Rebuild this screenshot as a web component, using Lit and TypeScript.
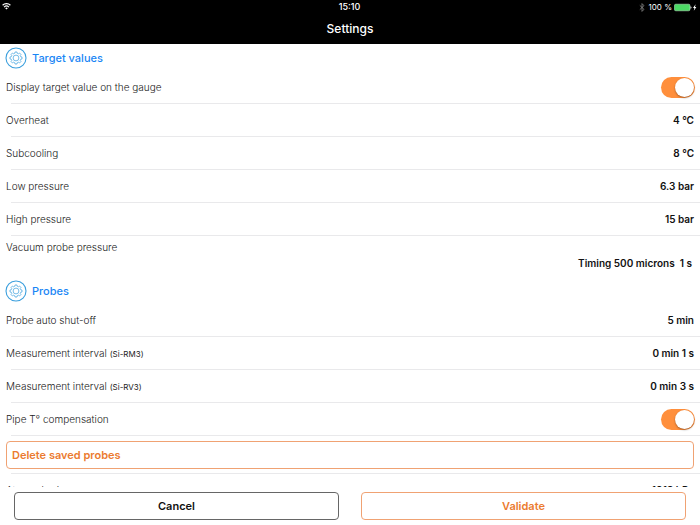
import { LitElement, html, css, svg, nothing } from "lit";
import { customElement, property } from "lit/decorators.js";

type Row = {
  label: string;
  note?: string;
  value?: string;
  toggle?: boolean;
  stacked?: boolean;
};

const targetRows: Row[] = [
  { label: "Display target value on the gauge", toggle: true },
  { label: "Overheat", value: "4 °C" },
  { label: "Subcooling", value: "8 °C" },
  { label: "Low pressure", value: "6.3 bar" },
  { label: "High pressure", value: "15 bar" },
  { label: "Vacuum probe pressure", value: "Timing 500 microns\u00a0 1 s", stacked: true },
];

const probeRows: Row[] = [
  { label: "Probe auto shut-off", value: "5 min" },
  { label: "Measurement interval", note: "(Si-RM3)", value: "0 min 1 s" },
  { label: "Measurement interval", note: "(Si-RV3)", value: "0 min 3 s" },
  { label: "Pipe T° compensation", toggle: true },
];

function gearPath(teeth: number, cx: number, cy: number, outer: number, inner: number): string {
  const step = (Math.PI * 2) / teeth;
  const points: string[] = [];
  for (let i = 0; i < teeth; i++) {
    for (const [offset, r] of [[-0.32, inner], [-0.2, outer], [0.2, outer], [0.32, inner]]) {
      const a = (i + offset) * step;
      points.push(`${(cx + r * Math.sin(a)).toFixed(2)} ${(cy - r * Math.cos(a)).toFixed(2)}`);
    }
  }
  return `M${points.join("L")}Z`;
}

const gear = gearPath(8, 11, 11, 6.1, 4.9);

@customElement("status-bar")
export class StatusBar extends LitElement {
  static styles = css`
    :host {
      display: grid;
      grid-template-columns: 1fr auto 1fr;
      align-items: center;
      height: 14px;
      padding: 0 3px 0 2px;
      font-size: 8px;
      line-height: 14px;
      font-weight: 400;
    }
    .time { font-weight: 500; font-size: 9px; }
    .right { display: flex; justify-content: flex-end; align-items: center; gap: 2px; }
    .bt { margin-right: 2px; }
    svg { display: block; }
  `;
  render() {
    return html`
      <svg width="9" height="14" viewBox="0 0 9 14" fill="none" stroke="#fff" stroke-width="1.2">
        <path d="M0.6 5.3a5.6 5.6 0 0 1 7.8 0M2.1 7.1a3.4 3.4 0 0 1 4.8 0" />
        <path d="M4.5 9.6L3.2 8.3a1.8 1.8 0 0 1 2.6 0z" fill="#fff" stroke="none" />
      </svg>
      <span class="time">15:10</span>
      <span class="right">
        <svg class="bt" width="6" height="9" viewBox="0 0 6 9" fill="none" stroke="#8a8a8a" stroke-width="0.8">
          <path d="M0.8 2.4L5 6.4 3 8.4V0.6L5 2.6 0.8 6.6" />
        </svg>
        <span>100 %</span>
        <svg width="23" height="9" viewBox="0 0 23 9">
          <rect x="0.4" y="1.2" width="15.6" height="6.6" rx="1.4" fill="#4cd964" stroke="#c9f2d0" stroke-width="0.5" />
          <path d="M16.5 3.2q1 0.3 1 1.3t-1 1.3z" fill="#fff" />
          <path d="M21.6 1.2L19 5h1.4l-0.6 2.8L22.4 3.9h-1.4z" fill="#fff" />
        </svg>
      </span>
    `;
  }
}

@customElement("section-title")
export class SectionTitle extends LitElement {
  @property() text = "";
  static styles = css`
    :host { display: block; }
    .title {
      display: flex;
      align-items: center;
      gap: 5px;
      height: 27px;
      margin: 0;
      padding: 0 5px;
      color: #1a86f5;
      font-size: 11px;
      font-weight: 500;
    }
  `;
  render() {
    return html`
      <h2 class="title">
        <svg width="22" height="22" viewBox="0 0 22 22" fill="none" stroke="#3b9fdd">
          <circle cx="11" cy="11" r="10" stroke-width="1.1" />
          ${svg`<path d=${gear} stroke-width="0.7" stroke-linejoin="round" />`}
          <circle cx="11" cy="11" r="2.9" stroke-width="0.7" />
        </svg>
        <span>${this.text}</span>
      </h2>
    `;
  }
}

@customElement("app-root")
export class AppRoot extends LitElement {
  static styles = css`
    :host {
      display: flex;
      flex-direction: column;
      height: 100vh;
      background: #fff;
      color: #222;
      font-family: Inter, "Liberation Sans", sans-serif;
      font-size: 10px;
      line-height: 16px;
    }
    .header { flex: none; height: 44px; background: #000; color: #fff; }
    .heading { margin: 0; font-size: 12px; line-height: 30px; font-weight: 500; text-align: center; }
    .list { flex: 1; min-height: 0; overflow-y: auto; scrollbar-width: none; }
    .row {
      display: flex;
      align-items: center;
      justify-content: space-between;
      box-sizing: border-box;
      height: 33px;
      padding: 0 6px 1px;
      background: linear-gradient(#e9e9eb, #e9e9eb) 11px 100% / 100% 1px no-repeat;
    }
    .stacked {
      flex-direction: column;
      align-items: stretch;
      justify-content: flex-start;
      height: 41px;
      padding: 3px 8px 0 6px;
      background: none;
    }
    .stacked .value { text-align: right; }
    .label { font-weight: 300; }
    .note { font-size: 8px; font-weight: 400; }
    .value { color: #111; font-weight: 600; }
    .switch {
      appearance: none;
      flex: none;
      display: flex;
      justify-content: flex-start;
      align-items: center;
      box-sizing: border-box;
      width: 34px;
      height: 21px;
      margin: 0 -1px 0 0;
      padding: 1px;
      border-radius: 11px;
      background: #d8d8d8;
    }
    .switch:checked { background: #ff8f3c; justify-content: flex-end; }
    .switch::before {
      content: "";
      width: 19px;
      height: 19px;
      border-radius: 50%;
      background: #fff;
      box-shadow: 0 1px 2px rgba(0, 0, 0, 0.35);
    }
    .action { padding: 5px 6px; height: 38px; align-items: stretch; }
    .button {
      flex: 1;
      box-sizing: border-box;
      height: 28px;
      padding: 0 5px;
      border: 1px solid currentColor;
      border-radius: 4px;
      background: #fff;
      color: #111;
      font: inherit;
      font-size: 11px;
      font-weight: 600;
    }
    .orange { color: #eb7b30; border-color: #f0a273; }
    .dark { border-color: #666; }
    .left { text-align: left; }
    .footer {
      flex: none;
      display: flex;
      gap: 22px;
      padding: 5px 14px;
      background: #fff;
    }
  `;

  private row(r: Row, index: number, group: string) {
    const id = `${group}-${index}`;
    return html`
      <div class="row ${r.stacked ? "stacked" : ""}">
        <label class="label" for=${id}>
          ${r.label} ${r.note ? html`<span class="note">${r.note}</span>` : nothing}
        </label>
        ${r.toggle
          ? html`<input class="switch" id=${id} type="checkbox" role="switch" checked />`
          : html`<output class="value" id=${id}>${r.value}</output>`}
      </div>
    `;
  }

  render() {
    return html`
      <header class="header">
        <status-bar></status-bar>
        <h1 class="heading">Settings</h1>
      </header>
      <main class="list">
        <section-title text="Target values"></section-title>
        ${targetRows.map((r, i) => this.row(r, i, "target"))}
        <section-title text="Probes"></section-title>
        ${probeRows.map((r, i) => this.row(r, i, "probe"))}
        <div class="row action">
          <button class="button orange left" type="button">Delete saved probes</button>
        </div>
        ${this.row({ label: "Atmospheric pressure", value: "1013 hPa" }, 0, "ambient")}
      </main>
      <footer class="footer">
        <button class="button dark" type="button">Cancel</button>
        <button class="button orange" type="button">Validate</button>
      </footer>
    `;
  }
}
